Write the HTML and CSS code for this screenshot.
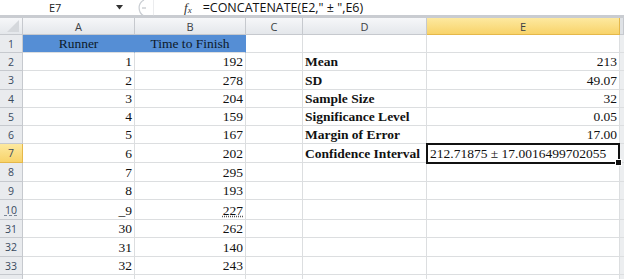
FILE: index.html
```html
<!DOCTYPE html>
<html lang="en">
<head>
    <meta charset="UTF-8">
    <title>Confidence Interval</title>
    <link rel="stylesheet" href="styles.css">
</head>
<body>
    <div class="formula-bar">
        <div class="name-box">E7</div>
        <svg class="drop" width="8" height="5" viewBox="0 0 8 5"><path d="M0 0h7L3.5 4.5z" fill="#333"/></svg>
        <svg class="handle" width="22" height="16" viewBox="0 0 22 16">
            <path d="M12 0 A9 9 0 0 0 12 16" fill="none" stroke="#c9cdd2" stroke-width="1.2"/>
            <path d="M10 8h4" stroke="#b5b9be" stroke-width="1"/>
            <path d="M22 0v16" stroke="#d6d9dd" stroke-width="1"/>
        </svg>
        <span class="fx">f<sub>x</sub></span>
        <div class="formula">=CONCATENATE(E2," ± ",E6)</div>
    </div>

    <div class="sheet">
        <div class="corner"><svg width="12" height="12" viewBox="0 0 12 12"><path d="M12 0v12H0z" fill="#d5d8dc"/></svg></div>
        <div class="col-head">A</div>
        <div class="col-head">B</div>
        <div class="col-head">C</div>
        <div class="col-head">D</div>
        <div class="col-head active">E</div>
        <div class="col-head edge"></div>

        <div class="row-head">1</div>
        <div class="cell title">Runner</div>
        <div class="cell title">Time to Finish</div>
        <div class="cell"></div><div class="cell"></div><div class="cell"></div><div class="cell edge"></div>

        <div class="row-head">2</div>
        <div class="cell num">1</div><div class="cell num">192</div><div class="cell"></div>
        <div class="cell label">Mean</div><div class="cell num">213</div><div class="cell edge"></div>

        <div class="row-head">3</div>
        <div class="cell num">2</div><div class="cell num">278</div><div class="cell"></div>
        <div class="cell label">SD</div><div class="cell num">49.07</div><div class="cell edge"></div>

        <div class="row-head">4</div>
        <div class="cell num">3</div><div class="cell num">204</div><div class="cell"></div>
        <div class="cell label">Sample Size</div><div class="cell num">32</div><div class="cell edge"></div>

        <div class="row-head">5</div>
        <div class="cell num">4</div><div class="cell num">159</div><div class="cell"></div>
        <div class="cell label">Significance Level</div><div class="cell num">0.05</div><div class="cell edge"></div>

        <div class="row-head">6</div>
        <div class="cell num">5</div><div class="cell num">167</div><div class="cell"></div>
        <div class="cell label">Margin of Error</div><div class="cell num">17.00</div><div class="cell edge"></div>

        <div class="row-head active">7</div>
        <div class="cell num">6</div><div class="cell num">202</div><div class="cell"></div>
        <div class="cell label">Confidence Interval</div>
        <div class="cell selected">212.71875 ± 17.0016499702055<span class="fill-handle"></span></div>
        <div class="cell edge"></div>

        <div class="row-head">8</div>
        <div class="cell num">7</div><div class="cell num">295</div><div class="cell"></div><div class="cell"></div><div class="cell"></div><div class="cell edge"></div>

        <div class="row-head">9</div>
        <div class="cell num">8</div><div class="cell num">193</div><div class="cell"></div><div class="cell"></div><div class="cell"></div><div class="cell edge"></div>

        <div class="row-head cut">10</div>
        <div class="cell num">_9</div><div class="cell num"><span class="cut">227</span></div><div class="cell"></div><div class="cell"></div><div class="cell"></div><div class="cell edge"></div>

        <div class="row-head">31</div>
        <div class="cell num">30</div><div class="cell num">262</div><div class="cell"></div><div class="cell"></div><div class="cell"></div><div class="cell edge"></div>

        <div class="row-head">32</div>
        <div class="cell num">31</div><div class="cell num">140</div><div class="cell"></div><div class="cell"></div><div class="cell"></div><div class="cell edge"></div>

        <div class="row-head">33</div>
        <div class="cell num">32</div><div class="cell num">243</div><div class="cell"></div><div class="cell"></div><div class="cell"></div><div class="cell edge"></div>

        <div class="row-head"></div>
        <div class="cell"></div><div class="cell"></div><div class="cell"></div><div class="cell"></div><div class="cell"></div><div class="cell edge"></div>
    </div>
</body>
</html>
```

FILE: styles.css
```css
body {
    margin: 0;
    padding: 0;
    width: 624px;
    height: 279px;
    overflow: hidden;
    background-color: #fff;
    font-family: 'Liberation Serif', serif;
}

/* formula bar */
.formula-bar {
    display: flex;
    align-items: center;
    height: 15px;
    border-bottom: 3px solid #c9ccd1;
    font-family: 'Open Sans', 'Liberation Sans', sans-serif;
    font-size: 11px;
    color: #222;
    white-space: nowrap;
}

.name-box {
    width: 112px;
    padding-left: 49px;
    box-sizing: border-box;
}

.drop {
    margin-left: 4px;
}

.handle {
    margin-left: 8px;
}

.fx {
    margin-left: 30px;
    font-family: 'Liberation Serif', serif;
    font-style: italic;
    font-size: 13px;
    color: #333;
}

.fx sub {
    font-size: 9px;
    vertical-align: -1px;
}

.formula {
    margin-left: 11px;
    font-size: 12.5px;
    color: #111;
}

/* sheet grid */
.sheet {
    display: grid;
    grid-template-columns: 23px 112px 111px 57px 124px 193px 4px;
    grid-template-rows: 17px 18px 18px 19px 18px 18px 18px 19px 19px 18px 20px 18px 19px 18px 10px;
}

.corner,
.col-head,
.row-head {
    box-sizing: border-box;
    background: linear-gradient(#f6f7f9, #e4e7eb);
    border-right: 1px solid #c6c9ce;
    border-bottom: 1px solid #c6c9ce;
    font-family: 'Open Sans', 'Liberation Sans', sans-serif;
    font-size: 11px;
    color: #3b3f45;
    display: flex;
    align-items: center;
    justify-content: center;
}

.corner {
    align-items: flex-end;
    justify-content: flex-end;
    padding: 0 3px 2px 0;
}

.row-head {
    background: #e9ebee;
    font-size: 10.5px;
    color: #3a4a5e;
}

.col-head.active,
.row-head.active {
    background: linear-gradient(#fde9a0, #f8d36a);
    border-right-color: #e5b84a;
    border-bottom-color: #e5b84a;
}

.col-head.edge {
    background: #dfe2e6;
}

.row-head.cut {
    text-decoration: underline dashed #7a8696;
}

.cell {
    box-sizing: border-box;
    border-right: 1px solid #dcdee0;
    border-bottom: 1px solid #dcdee0;
    font-size: 13.5px;
    color: #111;
    display: flex;
    align-items: flex-end;
    padding: 0 2px 0 2px;
    white-space: nowrap;
    line-height: 17px;
}

.cell.edge {
    background: #eceef0;
    border-right: none;
}

.cell.num {
    justify-content: flex-end;
}

.cell.title {
    background-color: #558ed5;
    border-right-color: #558ed5;
    justify-content: center;
    color: #0d1a2b;
}

.cell.label {
    font-weight: bold;
}

.cell.selected {
    position: relative;
    border: 2px solid #111;
    margin: -1px 0 -1px -1px;
    padding-left: 2px;
    z-index: 1;
}

.fill-handle {
    position: absolute;
    right: -4px;
    bottom: -4px;
    width: 5px;
    height: 5px;
    background: #111;
    border: 1px solid #fff;
}

.cut {
    text-decoration: underline dotted #555;
}
```
